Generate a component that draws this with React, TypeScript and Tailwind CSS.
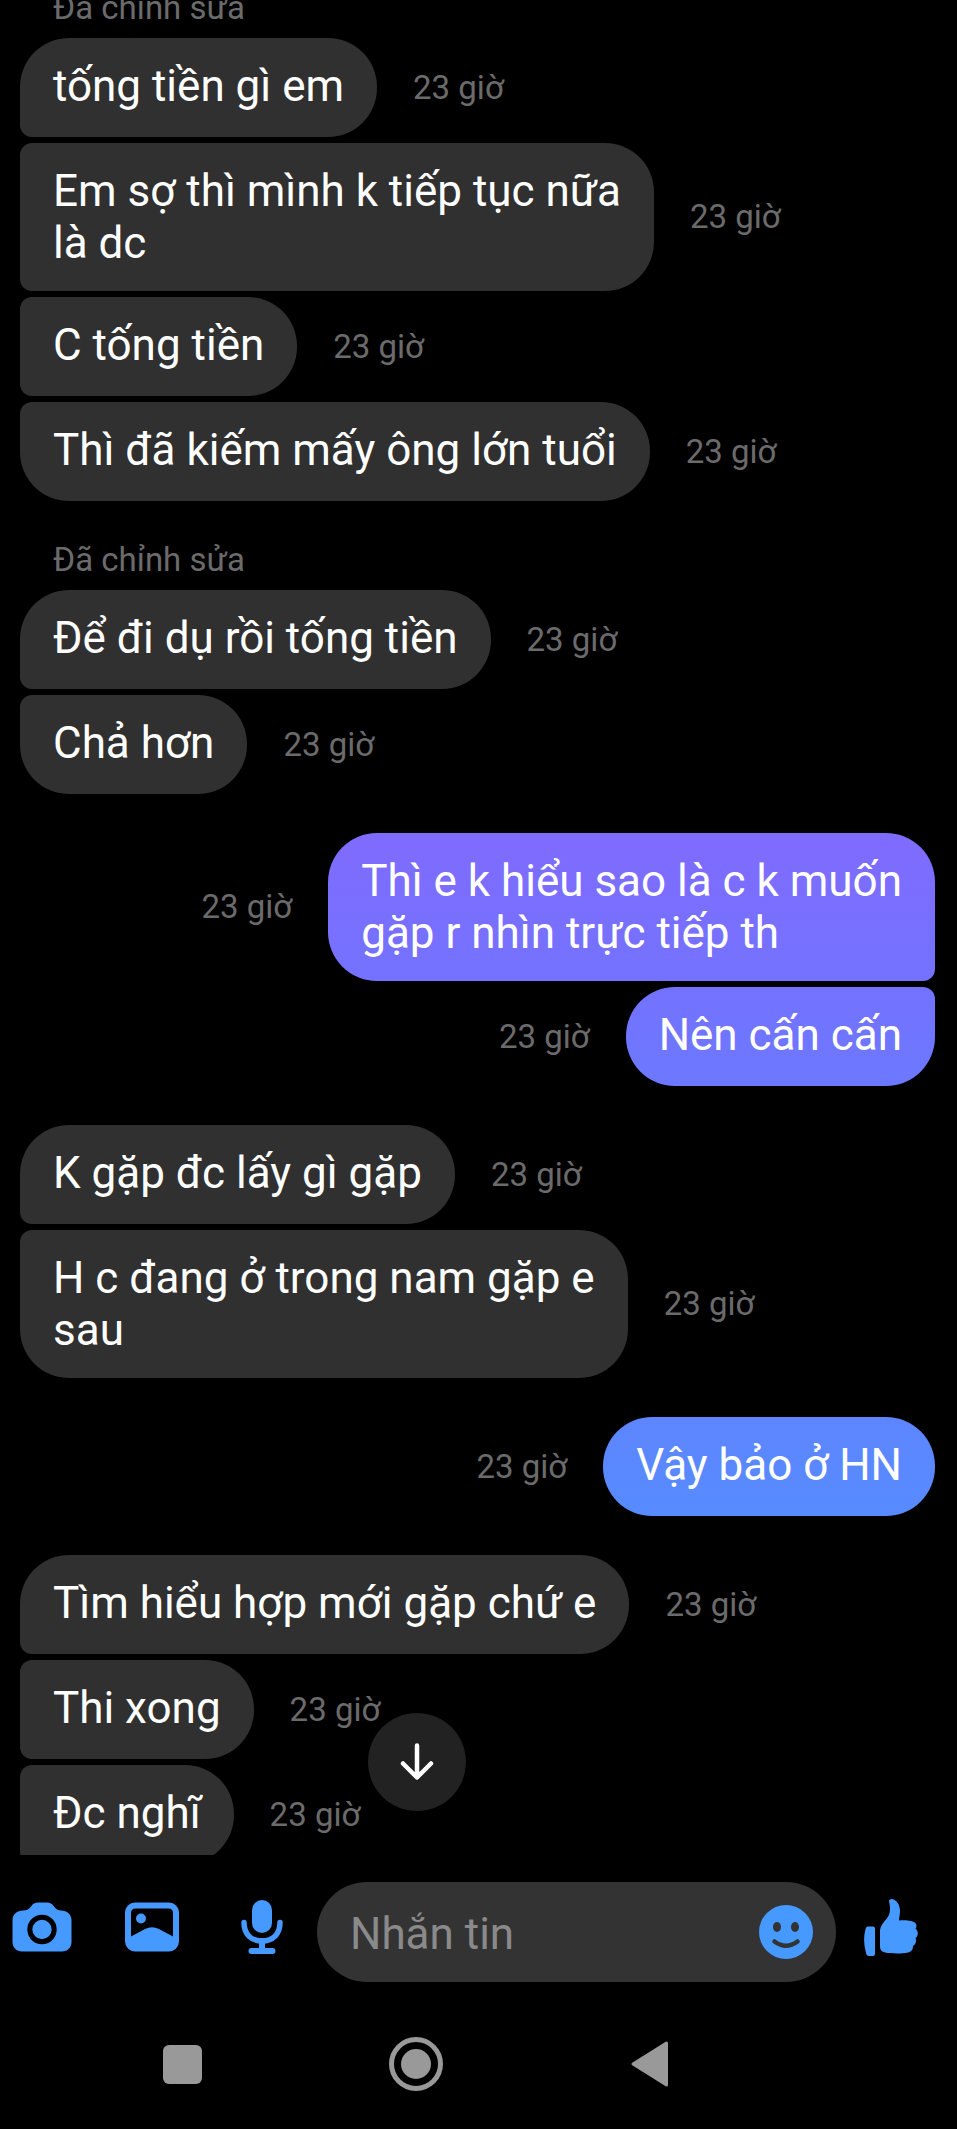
import { useState } from 'react'

type Mensagem = {
  text: string
  time: string
  mine?: boolean
  shape: string
  color?: string
  edited?: boolean
  newGroup?: boolean
}

const first = 'rounded-[49px] rounded-bl-xl'
const middle = 'rounded-[49px] rounded-l-xl'
const last = 'rounded-[49px] rounded-tl-xl'

const messages: Mensagem[] = [
  { text: 'tống tiền gì em', time: '23 giờ', shape: first, edited: true },
  { text: 'Em sợ thì mình k tiếp tục nữa\nlà dc', time: '23 giờ', shape: middle },
  { text: 'C tống tiền', time: '23 giờ', shape: middle },
  { text: 'Thì đã kiếm mấy ông lớn tuổi', time: '23 giờ', shape: last },
  { text: 'Để đi dụ rồi tống tiền', time: '23 giờ', shape: first, edited: true, newGroup: true },
  { text: 'Chả hơn', time: '23 giờ', shape: last },
  {
    text: 'Thì e k hiểu sao là c k muốn\ngặp r nhìn trực tiếp th',
    time: '23 giờ',
    mine: true,
    shape: 'rounded-[49px] rounded-br-xl',
    color: 'bg-linear-to-b from-[#7f6bff] to-[#7472ff]',
    newGroup: true,
  },
  {
    text: 'Nên cấn cấn',
    time: '23 giờ',
    mine: true,
    shape: 'rounded-[49px] rounded-tr-xl',
    color: 'bg-linear-to-b from-[#7372ff] to-[#6c78ff]',
  },
  { text: 'K gặp đc lấy gì gặp', time: '23 giờ', shape: first, newGroup: true },
  { text: 'H c đang ở trong nam gặp e\nsau', time: '23 giờ', shape: last },
  {
    text: 'Vậy bảo ở HN',
    time: '23 giờ',
    mine: true,
    shape: 'rounded-[49px]',
    color: 'bg-linear-to-b from-[#5d85ff] to-[#578bff]',
    newGroup: true,
  },
  { text: 'Tìm hiểu hợp mới gặp chứ e', time: '23 giờ', shape: first, newGroup: true },
  { text: 'Thi xong', time: '23 giờ', shape: middle },
  { text: 'Đc nghĩ', time: '23 giờ', shape: middle },
]

function Message({ message }: { message: Mensagem }) {
  return (
    <li className={message.newGroup ? 'mt-[39px]' : 'mt-[6px] first:mt-0'}>
      {message.edited && (
        <p className="mb-[10px] pl-[33px] text-[33px] leading-[40px] text-[#6b6b6b]">Đã chỉnh sửa</p>
      )}
      <div className={`flex items-center gap-[36px] ${message.mine ? 'flex-row-reverse' : ''}`}>
        <p
          className={`min-h-[99px] whitespace-pre px-[33px] py-[22px] text-[44px] leading-[52px] text-white ${message.shape} ${message.color ?? 'bg-[#303030]'}`}
        >
          {message.text}
        </p>
        <time className="text-[33px] leading-[40px] text-[#6b6b6b]">{message.time}</time>
      </div>
    </li>
  )
}

function CameraIcon() {
  return (
    <svg viewBox="0 0 60 50" className="h-[50px] w-[60px]" fill="none">
      <path
        d="M11 8.500 C15 8.500 17 7 19 4.500 C21 1.500 23 .5 26 .5 H35 C38 .5 40 1.500 42 4.500 C44 7 46 8.500 49 8.500 C55 8.500 59.500 12.500 59.500 18 V40 C59.500 45.500 55.500 49.500 50 49.500 H10 C4.500 49.500 .5 45.500 .5 40 V18 C.5 12.500 5 8.500 11 8.500 Z"
        fill="#4599ff"
      />
      <circle cx="30" cy="27.500" r="12.200" stroke="#000" strokeWidth="5" />
    </svg>
  )
}

function ImageIcon() {
  return (
    <svg viewBox="0 0 54 50" className="h-[50px] w-[54px]">
      <rect x="0" y=".5" width="54" height="49" rx="10" fill="#4599ff" />
      <path
        d="M6 11 Q6 6.500 10.500 6.500 H43.500 Q48 6.500 48 11 V34.500 L34 27 Q27 23.500 20 27 L6 34.500 Z"
        fill="#000"
      />
      <circle cx="16" cy="16.500" r="5" fill="#4599ff" />
    </svg>
  )
}

function MicIcon() {
  return (
    <svg viewBox="0 0 42 54" className="h-[54px] w-[42px]" fill="none" stroke="#4599ff" strokeLinecap="round">
      <rect x="11" y="0" width="20" height="33" rx="10" fill="#4599ff" stroke="none" />
      <path d="M3 22.500 C3 34 10 41 21 41 C32 41 39 34 39 22.500" strokeWidth="5.500" />
      <path d="M21 41 V50" strokeWidth="6" />
      <path d="M10.500 51 H31.500" strokeWidth="6" />
    </svg>
  )
}

function SmileIcon() {
  return (
    <svg viewBox="0 0 54 54" className="size-[54px]">
      <circle cx="27" cy="27" r="27" fill="#4599ff" />
      <ellipse cx="18" cy="22" rx="4" ry="5" fill="#333" />
      <ellipse cx="36" cy="22" rx="4" ry="5" fill="#333" />
      <path d="M15.500 36.500 Q27 45 38.500 36.500" fill="none" stroke="#333" strokeWidth="4.500" strokeLinecap="round" />
    </svg>
  )
}

function LikeIcon() {
  return (
    <svg viewBox="0 0 54 57" className="h-[57px] w-[54px]" fill="#4599ff">
      <path d="M3.500 27.500 H9 Q11 27.500 11 29.500 V55 Q11 57 9 57 H5 Q2.500 57 2 54 Q-1.500 42 1.500 30 Q2 27.500 3.500 27.500 Z" />
      <path d="M25 2 Q25 0 28 0 C33 1 36 6 36 12 C36 16 35 19 35 21.500 C40 21 47 21.500 50 23 C53 24.500 53 28 51.500 29.500 C54.500 32 54.500 37 51.500 39 C53 42 51.500 46 49 47 C49 51 47 53 44 53.500 C37 55 27 54.500 21 53.500 C18 53 16 51 16 48 V32 C16 28 19 24 22 20.500 C26 16 27 11 25 2 Z" />
    </svg>
  )
}

export default function App() {
  const [draft, setDraft] = useState('')

  return (
    <div className="flex h-screen flex-col bg-black font-[Roboto,sans-serif]">
      <main className="relative min-h-0 flex-1 overflow-hidden">
        {/* the list is scrolled a little past the first label */}
        <ul className="-mt-3 pl-5 pr-[22px]">
          {messages.map((message, i) => (
            <Message key={i} message={message} />
          ))}
        </ul>
        <button
          aria-label="Cuộn xuống"
          className="absolute bottom-11 left-[368px] flex size-[98px] items-center justify-center rounded-full bg-[#222]"
        >
          <svg viewBox="0 0 34 38" className="h-[38px] w-[34px]" fill="none" stroke="#fff" strokeWidth="4.500" strokeLinecap="round" strokeLinejoin="round">
            <path d="M17 2.500 V34 M3 20.500 L17 34.500 L31 20.500" />
          </svg>
        </button>
      </main>

      <form className="flex items-start pb-[17px] pt-[27px]" onSubmit={(e) => e.preventDefault()}>
        <div className="flex gap-[26px] pr-[13px]">
          <button type="button" aria-label="Máy ảnh" className="flex h-[90px] w-[84px] items-center justify-center">
            <CameraIcon />
          </button>
          <button type="button" aria-label="Ảnh" className="flex h-[90px] w-[84px] items-center justify-center">
            <ImageIcon />
          </button>
          <button type="button" aria-label="Ghi âm" className="flex h-[90px] w-[84px] items-center justify-center">
            <MicIcon />
          </button>
        </div>
        <div className="flex h-[100px] min-w-0 flex-1 items-center rounded-full bg-[#333] pl-[33px] pr-[23px]">
          <input
            aria-label="Nhắn tin"
            placeholder="Nhắn tin"
            value={draft}
            onChange={(e) => setDraft(e.target.value)}
            className="min-w-0 flex-1 bg-transparent pt-[3px] text-[44px] leading-[52px] text-white outline-none placeholder:text-[#8a8a8a]"
          />
          <button type="button" aria-label="Biểu tượng cảm xúc">
            <SmileIcon />
          </button>
        </div>
        <button type="button" aria-label="Thích" className="mr-[11px] flex h-[90px] w-[110px] items-center justify-center">
          <LikeIcon />
        </button>
      </form>

      <nav className="flex h-[130px] pl-[65px]">
        <button aria-label="Gần đây" className="flex w-[234px] items-center justify-center">
          <span className="size-[39px] rounded-md bg-[#999]" />
        </button>
        <button aria-label="Trang chủ" className="flex w-[234px] items-center justify-center">
          <svg viewBox="0 0 54 54" className="size-[54px]">
            <circle cx="27" cy="27" r="24.500" fill="none" stroke="#999" strokeWidth="5" />
            <circle cx="27" cy="27" r="15" fill="#999" />
          </svg>
        </button>
        <button aria-label="Quay lại" className="flex w-[234px] items-center justify-center">
          <svg viewBox="0 0 38 46" className="h-[46px] w-[38px]">
            <path d="M2 23 L35.500 2 V44 Z" fill="#999" stroke="#999" strokeWidth="3" strokeLinejoin="round" />
          </svg>
        </button>
      </nav>
    </div>
  )
}
